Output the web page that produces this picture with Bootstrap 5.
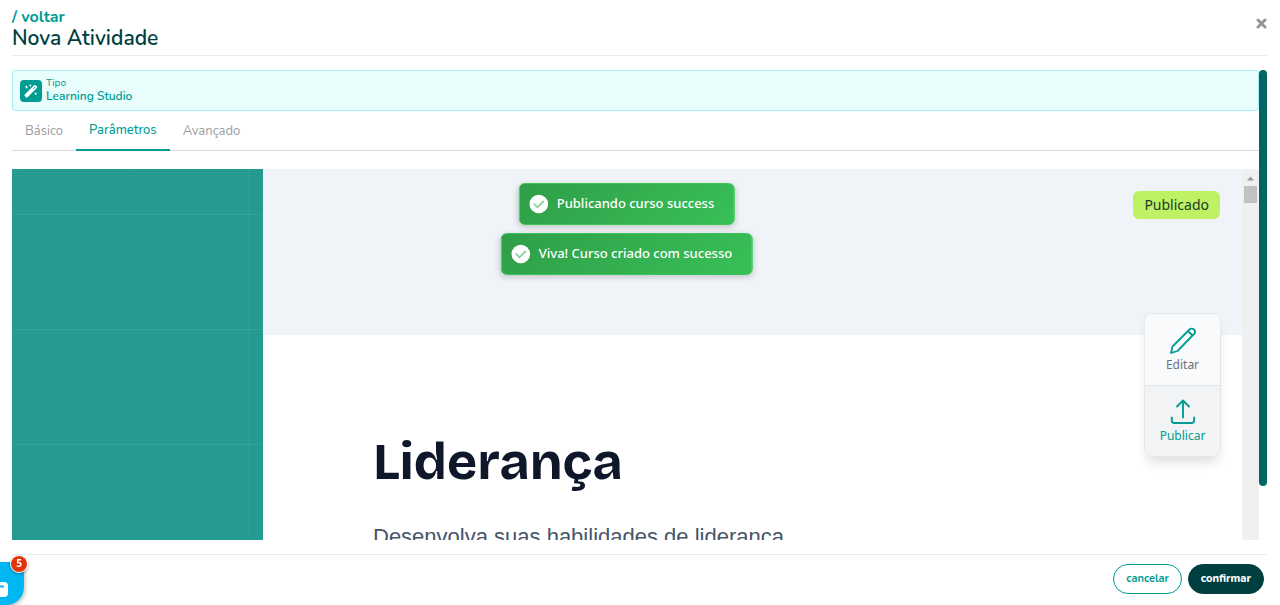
<!DOCTYPE html>
<html lang="pt-BR">
<head>
<meta charset="utf-8">
<meta name="viewport" content="width=device-width, initial-scale=1">
<title>Nova Atividade</title>
<link href="https://cdn.jsdelivr.net/npm/bootstrap@5.3.0/dist/css/bootstrap.min.css" rel="stylesheet">
<style>
  :root { --teal: #009c93; --deep: #003f3f; --line: #e9ebec; }
  body { font-family: Nunito, Lato, sans-serif; font-size: 13px; color: var(--deep); }
  .dialog-head { margin: 0 13px 0 12px; padding-top: 6px; height: 56px; border-bottom: 1px solid var(--line); }
  .back-link { font-size: 16px; line-height: 22px; font-weight: 700; color: var(--teal); }
  .dialog-title { font-size: 21px; line-height: 20px; font-weight: 600; }
  .close-btn { line-height: 0; margin-top: 12px; }
  .dialog-body { margin: 14px 13px 14px 12px; }
  .type-box { height: 41px; padding: 0 7px 2px; gap: 4px; background: #e8fdfc; border: 1px solid #a3f1fb; border-radius: 3px; color: var(--teal); }
  .type-icon { width: 22px; height: 22px; margin-top: 2px; background: var(--teal); border-radius: 4px; }
  .type-label { font-size: 10px; line-height: 12px; }
  .type-name { font-size: 12px; line-height: 14px; font-weight: 600; }
  .param-tabs { height: 40px; border-bottom: 1px solid #d9dcdc; }
  .param-tabs .nav-link { height: 40px; padding: 0 13px; font-size: 13px; line-height: 41px; color: #9a9d9f; border-radius: 0; }
  .param-tabs .nav-link.active { font-weight: 500; line-height: 39px; color: var(--teal); border-bottom: 2px solid var(--teal); }
  .outer-track { width: 8px; }
  .outer-thumb { height: 416px; max-height: 100%; border-radius: 4px; background: #006663; }
  .studio { margin-top: 18px; font-family: "Noto Sans", sans-serif; }
  .cover { flex: 0 0 251px; background-color: #249a90;
    background-image: linear-gradient(#ffffff12 1px, transparent 1px), linear-gradient(90deg, #ffffff0b 1px, transparent 1px);
    background-size: 115px 115px; background-position: 6px 45px; }
  .hero-band { flex: 0 0 166px; background: #f0f3f8; }
  .course-copy { padding: 96px 110px 0; }
  .course-title { font: 700 52px/62px "Bricolage Grotesque", "Liberation Sans", sans-serif; color: #0f172a; }
  .course-desc { margin-top: 28px; font: 400 22px/32px "Liberation Sans", sans-serif; color: #475569; }
  .inner-track { flex: 0 0 17px; padding-top: 7px; background: #f0f0f0; }
  .inner-thumb { width: 13px; height: 17px; margin-top: 5px; background: #c1c1c1; }
  .notices { top: 14px; gap: 8px; }
  .notice { height: 42px; padding: 0 20px 0 9px; gap: 8px; font-size: 13px; font-weight: 500; white-space: nowrap; color: #fff;
    border: 1px solid #3bc65b; border-radius: 6px; background: linear-gradient(135deg, #2f9e48, #38c058); box-shadow: 0 2px 6px #0003; }
  .status-tag { top: 22px; right: 22px; height: 28px; padding: 0 11px; border-radius: 6px; background: #bef264; color: #1c3a28; font-size: 14px; line-height: 28px; }
  .side-tools { top: 144px; right: 21px; width: 77px; border: 1px solid #e5e7eb; border-radius: 8px; overflow: hidden; box-shadow: 0 8px 12px -3px #0002; }
  .side-tools button { height: 71px; border: 0; padding: 2px 0 0; background: #f8fafc; color: #6b7280; font-size: 12px; line-height: 20px; }
  .side-tools button + button { border-top: 1px solid #e2e5e9; background: #f1f3f5; color: var(--teal); }
  .dialog-foot { margin: 0 13px 0 12px; padding: 9px 3px 11px; gap: 6px; border-top: 1px solid var(--line); }
  .pill { height: 30px; padding: 0 12px; border: 1px solid var(--teal); border-radius: 15px; font-size: 11px; font-weight: 700; line-height: 26px; color: var(--teal); }
  .pill-main { background: var(--deep); border-color: var(--deep); color: #fff; font-weight: 800; }
  .chat { left: -20px; bottom: 0; width: 44px; height: 43px; background: #00b7f1; border: 0; border-radius: 0 0 18px 0; box-shadow: 1px 2px 4px #0004; }
  .chat-count { left: 31px; top: -6px; width: 16px; height: 16px; border-radius: 50%; background: #e2340b; color: #fff; font: 700 10px/15px "Noto Sans", sans-serif; box-shadow: 0 0 0 1px #fff, 0 1px 3px 1px #0005; }
</style>
</head>
<body class="vh-100 d-flex flex-column overflow-hidden bg-white">
  <header class="dialog-head d-flex justify-content-between flex-shrink-0">
    <div>
      <a href="#" class="back-link d-block text-decoration-none">/ voltar</a>
      <h1 class="dialog-title m-0">Nova Atividade</h1>
    </div>
    <button type="button" class="close-btn btn p-0 border-0 align-self-start" aria-label="Fechar">
      <svg width="11" height="11" viewBox="0 0 11 11"><path d="M2 2l7 7M9 2l-7 7" stroke="#969696" stroke-width="3" stroke-linecap="round"/></svg>
    </button>
  </header>

  <main class="dialog-body d-flex flex-grow-1 overflow-hidden">
    <div class="d-flex flex-column flex-grow-1 overflow-hidden">
      <div class="type-box d-flex align-items-center flex-shrink-0">
        <span class="type-icon d-flex align-items-center justify-content-center">
          <svg width="14" height="14" viewBox="0 0 14 14" fill="#fff"><path d="M1 10.200L9.800 1.400a1.500 1.500 0 0 1 2.100 0l.7.7a1.500 1.500 0 0 1 0 2.100L3.800 13a1.500 1.500 0 0 1-2.100 0L1 12.300a1.500 1.500 0 0 1 0-2.100z"/><path d="M8.800 4.700l2-2 .6.600-2 2z" fill="#009c93"/><path d="M2.500 1l.5 1.500L4.500 3 3 3.500 2.500 5 2 3.500.5 3 2 2.500zM6.300 0l.4 1.100 1.100.4-1.100.4L6.300 3l-.4-1.100-1.100-.4 1.100-.4zM11.800 8l.5 1.300 1.300.5-1.300.5-.5 1.300-.5-1.300-1.300-.5 1.300-.5z"/></svg>
        </span>
        <div><div class="type-label">Tipo</div><div class="type-name">Learning Studio</div></div>
      </div>
      <ul class="param-tabs nav flex-shrink-0">
        <li><a class="nav-link" href="#">Básico</a></li>
        <li><a class="nav-link active" href="#" aria-current="page">Parâmetros</a></li>
        <li><a class="nav-link" href="#">Avançado</a></li>
      </ul>

      <section class="studio d-flex flex-grow-1 overflow-hidden">
        <div class="d-flex flex-grow-1 position-relative overflow-hidden">
          <div class="cover"></div>
          <div class="d-flex flex-column flex-grow-1 overflow-hidden">
            <div class="hero-band"></div>
            <div class="course-copy">
              <h2 class="course-title m-0">Liderança</h2>
              <p class="course-desc mb-0">Desenvolva suas habilidades de liderança</p>
            </div>
          </div>
          <div class="notices position-absolute start-50 translate-middle-x d-flex flex-column align-items-center">
            <div class="notice d-flex align-items-center" role="status">
              <svg width="20" height="20" viewBox="0 0 20 20"><circle cx="10" cy="10" r="9.300" fill="#fff"/><path d="M5 9.700l3.700 3.600 6.300-6.300" fill="none" stroke="#8fce9d" stroke-width="1.800"/></svg>
              Publicando curso success
            </div>
            <div class="notice d-flex align-items-center" role="status">
              <svg width="20" height="20" viewBox="0 0 20 20"><circle cx="10" cy="10" r="9.300" fill="#fff"/><path d="M5 9.700l3.700 3.600 6.300-6.300" fill="none" stroke="#8fce9d" stroke-width="1.800"/></svg>
              Viva! Curso criado com sucesso
            </div>
          </div>
          <span class="status-tag position-absolute">Publicado</span>
          <div class="side-tools position-absolute d-flex flex-column">
            <button type="button" class="d-flex flex-column align-items-center justify-content-center">
              <svg width="28" height="28" viewBox="0 0 28 28" fill="none" stroke="#009c93" stroke-width="1.800" stroke-linejoin="round"><path d="M2 26l1.500-6.500L20.500 2.500a2.900 2.900 0 0 1 4.500 4.500L8.500 24zM19 4l5 5"/></svg>
              Editar
            </button>
            <button type="button" class="d-flex flex-column align-items-center justify-content-center">
              <svg width="28" height="28" viewBox="0 0 28 28" fill="none" stroke="#009c93" stroke-width="1.900" stroke-linecap="round" stroke-linejoin="round"><path d="M14 19.500V2.500M8 8.500l6-6 6 6M2.800 19.500v3a2.500 2.500 0 0 0 2.500 2.500h17.400a2.500 2.500 0 0 0 2.500-2.500v-3"/></svg>
              Publicar
            </button>
          </div>
        </div>
        <div class="inner-track d-flex flex-column align-items-center" aria-hidden="true">
          <svg width="7" height="5" viewBox="0 0 7 5"><path d="M0 4.500L3.500.5 7 4.500z" fill="#989898"/></svg>
          <div class="inner-thumb"></div>
        </div>
      </section>
    </div>
    <div class="outer-track flex-shrink-0" aria-hidden="true"><div class="outer-thumb"></div></div>
  </main>

  <footer class="dialog-foot d-flex justify-content-end flex-shrink-0">
    <button type="button" class="pill btn">cancelar</button>
    <button type="button" class="pill pill-main btn">confirmar</button>
  </footer>

  <button type="button" class="chat position-fixed p-0" aria-label="Mensagens">
    <svg class="d-block" width="44" height="43" viewBox="0 0 44 43"><rect x="8" y="20" width="20" height="15" rx="4" fill="#fff"/><path d="M12 24.500h12" stroke="#00b7f1" stroke-width="2"/></svg>
    <span class="chat-count position-absolute text-center">5</span>
  </button>
<script src="https://cdn.jsdelivr.net/npm/bootstrap@5.3.0/dist/js/bootstrap.bundle.min.js"></script>
</body>
</html>
